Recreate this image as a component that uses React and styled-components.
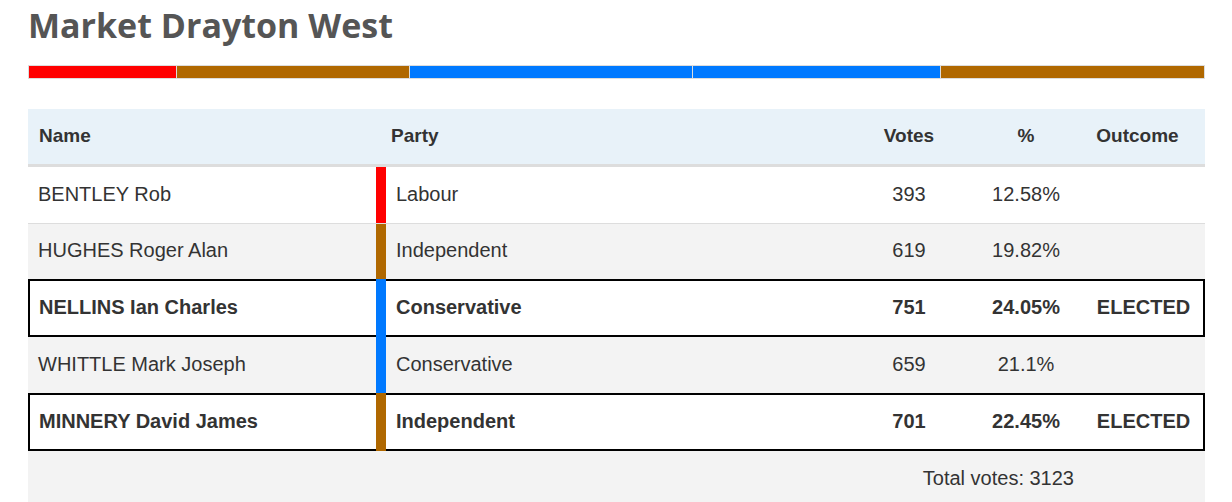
import React from "react";
import styled, { createGlobalStyle } from "styled-components";

const GlobalStyle = createGlobalStyle`
  body {
    margin: 0;
    background: #fff;
    font-family: "Liberation Sans", Arial, sans-serif;
    color: #333;
  }
`;

const candidates = [
  { name: "BENTLEY Rob", party: "Labour", colour: "#ff0000", votes: 393, pct: "12.58%" },
  { name: "HUGHES Roger Alan", party: "Independent", colour: "#b06800", votes: 619, pct: "19.82%" },
  { name: "NELLINS Ian Charles", party: "Conservative", colour: "#0079ff", votes: 751, pct: "24.05%", elected: true },
  { name: "WHITTLE Mark Joseph", party: "Conservative", colour: "#0079ff", votes: 659, pct: "21.1%" },
  { name: "MINNERY David James", party: "Independent", colour: "#b06800", votes: 701, pct: "22.45%", elected: true },
];

const total = 3123;
const COLS = "348px 474px 118px 116px 1fr";
const ELECTED_COLS = "346px 474px 118px 116px 1fr";

export default function App() {
  return (
    <Page>
      <GlobalStyle />
      <Title>Market Drayton West</Title>
      <VoteBar>
        {candidates.map((c) => (
          <Segment key={c.name} $colour={c.colour} style={{ flexGrow: c.votes }} />
        ))}
      </VoteBar>
      <Table>
        <HeadRow>
          <HeadCell>Name</HeadCell>
          <HeadCell $pad="15px">Party</HeadCell>
          <HeadCell $align="center">Votes</HeadCell>
          <HeadCell $align="center">%</HeadCell>
          <HeadCell $align="center" $shift="-7px">Outcome</HeadCell>
        </HeadRow>
        {candidates.map((c, i) => (
          <Row
            key={c.name}
            $elected={c.elected}
            $shade={i % 2 === 1}
            $divider={i > 0 && !c.elected && !candidates[i - 1].elected}
          >
            <NameCell $elected={c.elected}>{c.name}</NameCell>
            <PartyCell $colour={c.colour} $elected={c.elected}>{c.party}</PartyCell>
            <Cell>{c.votes}</Cell>
            <Cell>{c.pct}</Cell>
            <Cell>{c.elected ? "ELECTED" : ""}</Cell>
          </Row>
        ))}
        <Footer>Total votes: {total}</Footer>
      </Table>
    </Page>
  );
}

const Page = styled.div`
  width: 1177px;
  padding: 0 27px 0 28px;
`;

const Title = styled.h1`
  margin: 0;
  padding-top: 4px;
  height: 63px;
  box-sizing: border-box;
  font-family: "Open Sans", "Noto Sans", sans-serif;
  font-weight: 700;
  font-size: 34px;
  line-height: 42px;
  color: #555;
`;

const VoteBar = styled.div`
  display: flex;
  height: 14px;
  margin-top: 2px;
  margin-bottom: 30px;
`;

const Segment = styled.div`
  flex-basis: 0;
  background: ${(p) => p.$colour};
  border: 1px solid #ddd;
  & + & {
    border-left: 0;
  }
`;

const Table = styled.div`
  display: flex;
  flex-direction: column;
  font-size: 20px;
  color: #333;
`;

const HeadRow = styled.div`
  display: grid;
  grid-template-columns: ${COLS};
  height: 58px;
  box-sizing: border-box;
  background: #e8f2f9;
  border-bottom: 3px solid #ddd;
  font-weight: 700;
  font-size: 19px;
`;

const HeadCell = styled.div`
  display: flex;
  align-items: center;
  padding-bottom: 2px;
  justify-content: ${(p) => (p.$align === "center" ? "center" : "flex-start")};
  padding-left: ${(p) => p.$pad || (p.$align === "center" ? "0" : "11px")};
  transform: ${(p) => (p.$shift ? `translateX(${p.$shift})` : "none")};
`;

const Row = styled.div`
  display: grid;
  grid-template-columns: ${(p) => (p.$elected ? ELECTED_COLS : COLS)};
  box-sizing: border-box;
  height: ${(p) => (p.$elected ? "58px" : "56px")};
  background: ${(p) => (p.$shade ? "#f3f3f3" : "#fff")};
  border-top: ${(p) => (p.$divider ? "1px solid #ddd" : "0")};
  border: ${(p) => (p.$elected ? "2px solid #000" : undefined)};
  font-weight: ${(p) => (p.$elected ? 700 : 400)};
`;

const Cell = styled.div`
  display: flex;
  align-items: center;
  justify-content: center;
  padding-bottom: 2px;
`;

const NameCell = styled.div`
  display: flex;
  align-items: center;
  padding-bottom: 2px;
  padding-left: ${(p) => (p.$elected ? "9px" : "10px")};
`;

const PartyCell = styled.div`
  display: flex;
  align-items: center;
  padding-left: 10px;
  padding-bottom: 2px;
  border-left: 10px solid ${(p) => p.$colour};
  margin: ${(p) => (p.$elected ? "-2px 0" : "0")};
`;

const Footer = styled.div`
  display: flex;
  justify-content: flex-end;
  align-items: center;
  height: 56px;
  padding-right: 131px;
  padding-bottom: 2px;
  box-sizing: border-box;
  background: #f3f3f3;
`;
